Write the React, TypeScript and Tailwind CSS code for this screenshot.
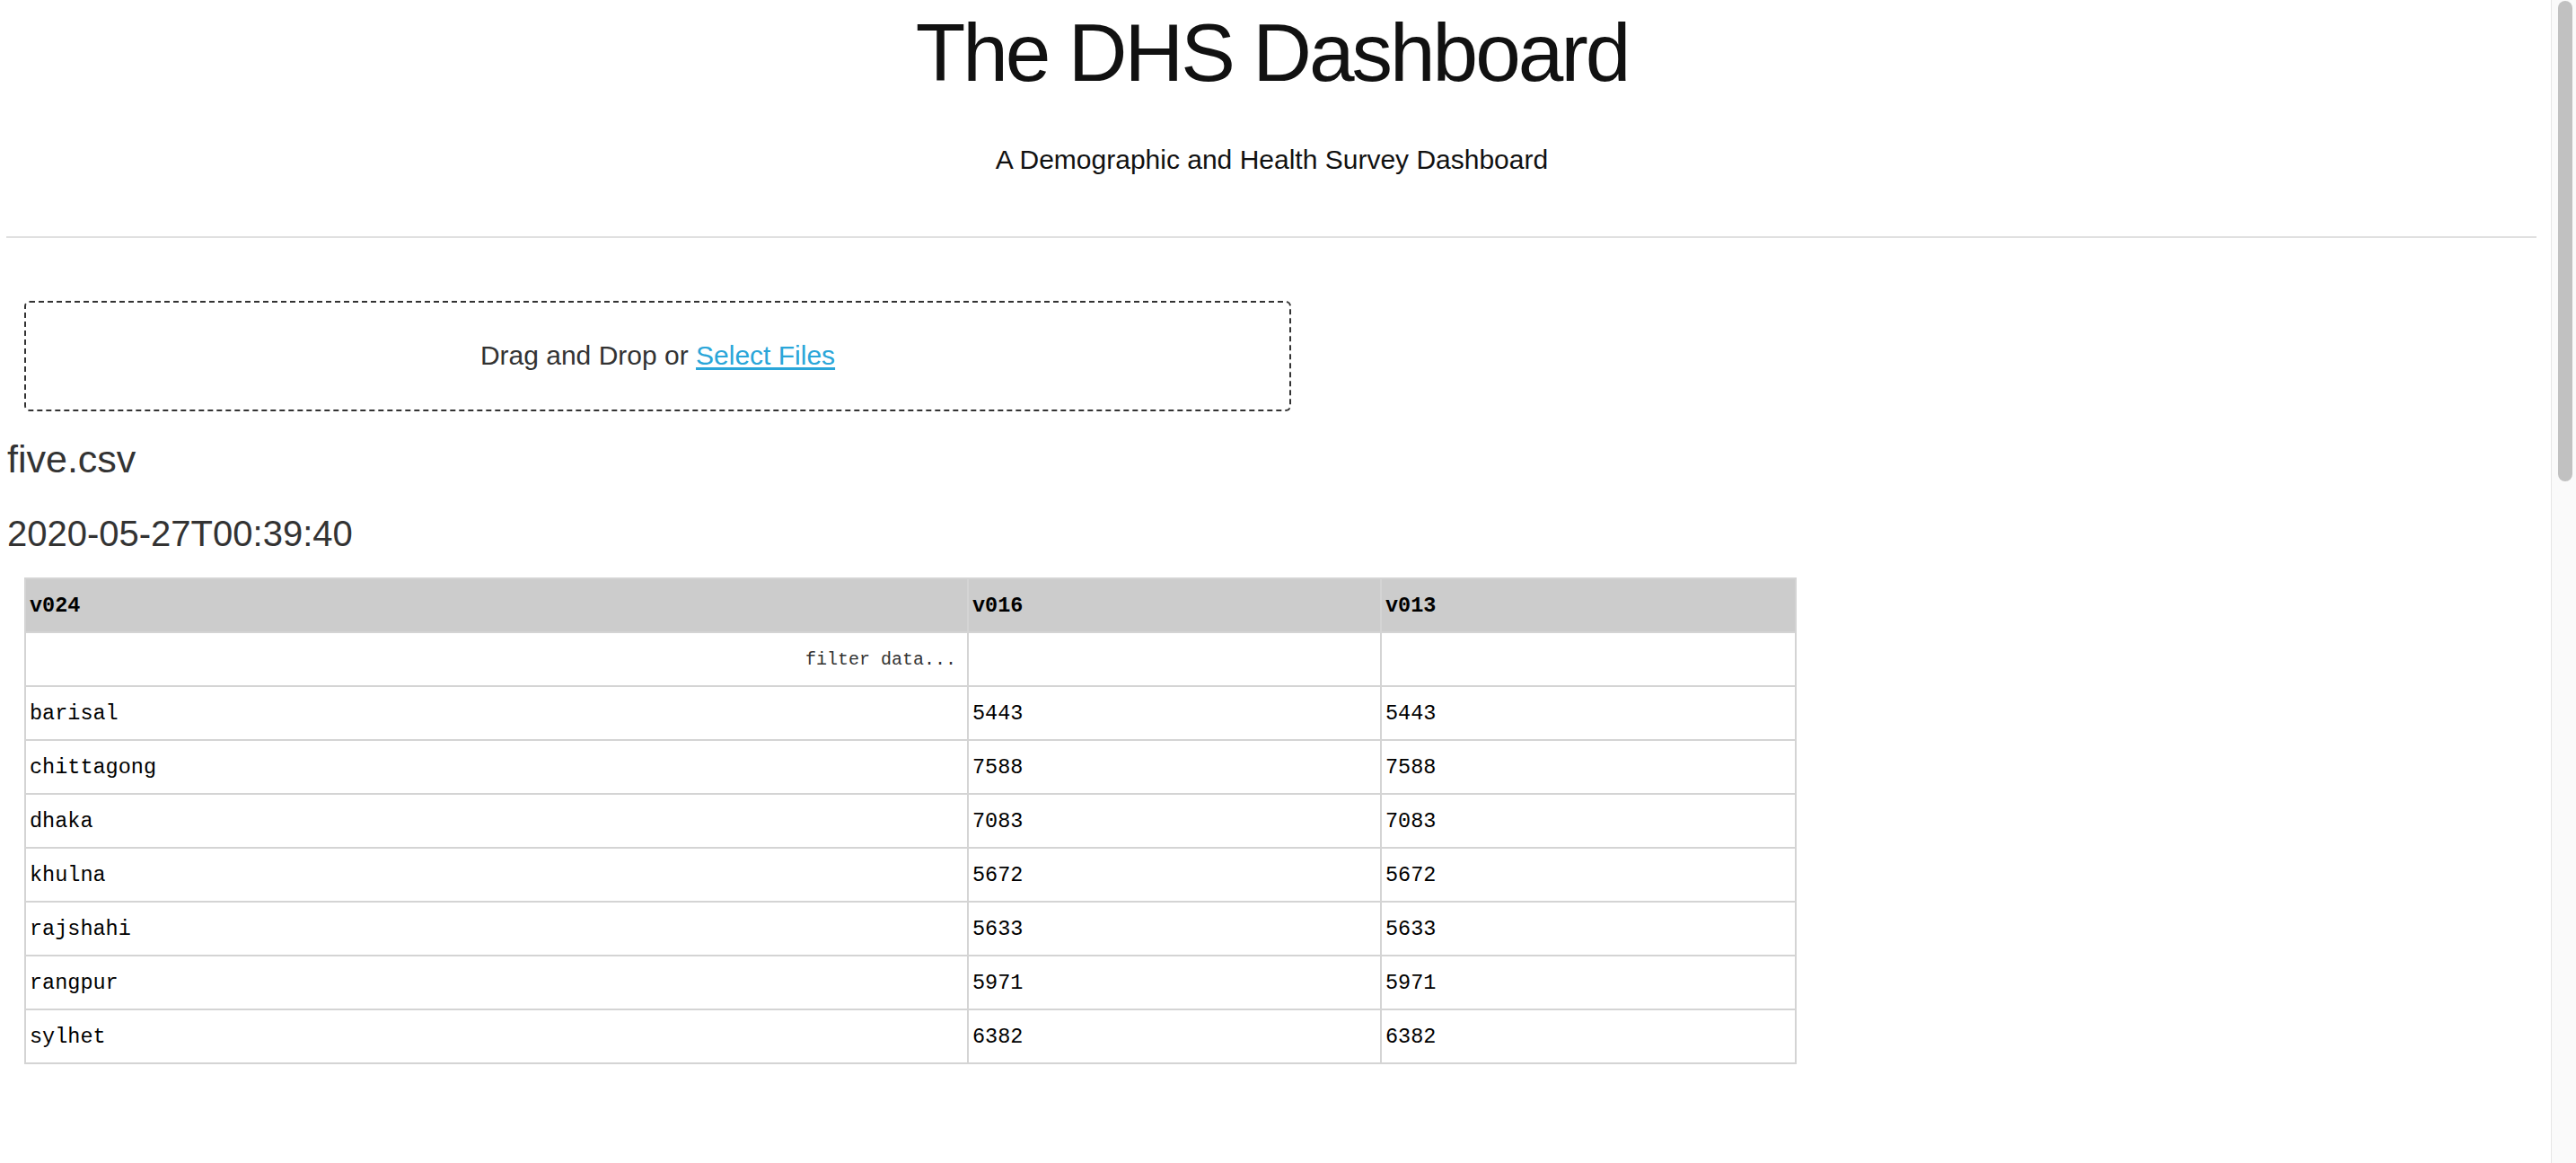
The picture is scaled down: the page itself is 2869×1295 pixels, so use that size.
const rows = [
  ['barisal', '5443', '5443'],
  ['chittagong', '7588', '7588'],
  ['dhaka', '7083', '7083'],
  ['khulna', '5672', '5672'],
  ['rajshahi', '5633', '5633'],
  ['rangpur', '5971', '5971'],
  ['sylhet', '6382', '6382'],
];

const cell = 'h-[60px] border-2 border-[#d4d4d4] px-[4px] pt-[2px] align-middle';

export default function App() {
  return (
    <div className="flex h-screen w-full overflow-hidden bg-white">
      <main className="flex-1 pl-[8px] pr-[16px] font-['Liberation_Sans',Arial,sans-serif]">
        <h1 className="mt-[7px] text-center text-[91px] leading-[1.15] tracking-[-3px] text-[#111]">
          The DHS Dashboard
        </h1>
        <p className="mt-[49px] text-center text-[30px] leading-[1.15] text-[#111]">
          A Demographic and Health Survey Dashboard
        </p>
        <hr className="mt-[68px] -ml-px border-0 border-t-2 border-[#e0e0e0]" />

        <div className="mt-[70px] ml-[19px] flex h-[123px] w-[1411px] items-center justify-center rounded-[6px] border-2 border-dashed border-[#333]">
          <span className="text-[30px] leading-[1.15] text-[#333]">
            Drag and Drop or{' '}
            <a href="#" className="text-[#2aa6d9] underline underline-offset-[3px]">
              Select Files
            </a>
          </span>
        </div>

        <h3 className="mt-[29px] text-[43px] leading-[1.15] text-[#333]">five.csv</h3>
        <h4 className="mt-[34px] text-[40px] leading-[1.15] text-[#333]">2020-05-27T00:39:40</h4>

        <table className="mt-[26px] ml-[19px] w-[1972px] table-fixed border-collapse font-['Liberation_Mono','Courier_New',monospace] text-[23.5px] text-black">
          <colgroup>
            <col className="w-[1050px]" />
            <col className="w-[460px]" />
            <col className="w-[462px]" />
          </colgroup>
          <thead>
            <tr className="bg-[#cccccc]">
              <th className={`${cell} text-left font-bold`}>v024</th>
              <th className={`${cell} text-left font-bold`}>v016</th>
              <th className={`${cell} text-left font-bold`}>v013</th>
            </tr>
          </thead>
          <tbody>
            <tr>
              <td className={`${cell} pr-[12px] text-right text-[20px] text-[#333]`}>filter data...</td>
              <td className={cell} />
              <td className={cell} />
            </tr>
            {rows.map((r) => (
              <tr key={r[0]}>
                {r.map((v, i) => (
                  <td key={i} className={cell}>
                    {v}
                  </td>
                ))}
              </tr>
            ))}
          </tbody>
        </table>
      </main>

      {/* fake browser scrollbar */}
      <div className="flex w-[28px] shrink-0 flex-col border-l border-[#e6e6e6] bg-[#fafafa] pt-px pl-[7px] pr-[4px]">
        <div className="h-[535px] w-[16px] rounded-full bg-[#c1c1c1]" />
      </div>
    </div>
  );
}
